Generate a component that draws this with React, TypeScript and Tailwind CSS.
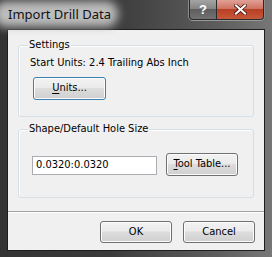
function Button({ children, focused = false, className = "" }: { children: React.ReactNode; focused?: boolean; className?: string }) {
  return (
    <div
      className={
        "flex items-center justify-center rounded-[3px] border bg-[linear-gradient(#f2f2f2_0%,#ebebeb_45%,#dddddd_50%,#cfcfcf_100%)] shadow-[inset_0_0_0_1px_#fcfcfc] " +
        (focused ? "border-[#3c7fb1] shadow-[inset_0_0_0_1px_#48d8f4]" : "border-[#707070]") +
        " " +
        className
      }
    >
      {children}
    </div>
  )
}

function GroupBox({ title, className = "", children }: { title: string; className?: string; children: React.ReactNode }) {
  return (
    <div className={"relative rounded-[3px] border border-[#d5dfe5] shadow-[inset_1px_1px_0_#fff] " + className}>
      <span className="absolute -top-[8px] left-[9px] bg-[#f0f0f0] px-[1px] leading-[14px]">{title}</span>
      {children}
    </div>
  )
}

export default function App() {
  return (
    <div className="relative h-[257px] w-[272px] overflow-hidden bg-[linear-gradient(90deg,#333_0%,#3a3a3a_40%,#5d5d5d_80%,#777_100%)] font-['DejaVu_Sans_Condensed',sans-serif] text-[11px] text-black">
      {/* title bar */}
      <div className="flex h-[29px] items-start">
        <div className="-ml-[6px] mt-[1px] h-[26px] w-[124px] rounded-[12px] bg-[#bdbdbd] blur-[5px]" />
        <span className="absolute left-[8px] top-[5px] font-['Noto_Sans',sans-serif] text-[13px] leading-[18px] text-[#111]">
          Import Drill Data
        </span>
        <div className="ml-auto mr-[8px] flex h-[20px] rounded-b-[4px] border border-t-0 border-[#2a2a2a] shadow-[0_1px_0_#9a9a9a,1px_0_0_#8a8a8a,-1px_0_0_#8a8a8a]">
          <div className="flex w-[27px] items-center justify-center rounded-bl-[4px] border-r border-[#2a2a2a] bg-[linear-gradient(#a4a4a4_0%,#858585_45%,#5e5e5e_50%,#727272_100%)] font-['Liberation_Sans',sans-serif] text-[13px] font-bold text-white">
            ?
          </div>
          <div className="flex w-[46px] items-center justify-center rounded-br-[4px] bg-[linear-gradient(#e0a196_0%,#cf7361_45%,#b83f25_50%,#c8583a_100%)]">
            <svg width="13" height="11" viewBox="0 0 13 11">
              <path d="M2 1.5 L11 9.5 M11 1.5 L2 9.5" stroke="#3a0a00" strokeWidth="3.6" strokeLinecap="square" />
              <path d="M2 1.5 L11 9.5 M11 1.5 L2 9.5" stroke="#fff" strokeWidth="2.2" strokeLinecap="square" />
            </svg>
          </div>
        </div>
      </div>

      {/* client area */}
      <div className="mx-[7px] flex h-[222px] flex-col border border-[#1e1e1e] bg-[#f0f0f0]">
        <div className="flex flex-col px-[10px] pt-[15px]">
          <GroupBox title="Settings" className="h-[72px]">
            <div className="pl-[11px] pt-[10px] leading-[13px]">Start Units: 2.4 Trailing Abs Inch</div>
            <Button focused className="ml-[14px] mt-[8px] h-[23px] w-[73px]">
              <span>
                <span className="underline underline-offset-2">U</span>nits...
              </span>
            </Button>
          </GroupBox>

          <GroupBox title="Shape/Default Hole Size" className="mt-[12px] h-[69px]">
            <div className="flex items-center pl-[13px] pt-[23px]">
              <div className="mt-[2px] flex h-[19px] w-[125px] items-center border border-[#abadb3] border-t-[#abadb3] bg-white pl-[3px]">
                0.0320:0.0320
              </div>
              <Button className="ml-[9px] h-[23px] w-[72px]">
                <span>
                  <span className="underline underline-offset-2">T</span>ool Table...
                </span>
              </Button>
            </div>
          </GroupBox>
        </div>

        <div className="mt-[13px] border-t border-[#a0a0a0] shadow-[0_1px_0_#fff]" />

        <div className="flex justify-end gap-[11px] pr-[9px] pt-[9px]">
          <Button className="h-[22px] w-[72px]">OK</Button>
          <Button className="h-[22px] w-[72px]">Cancel</Button>
        </div>
      </div>
    </div>
  )
}
